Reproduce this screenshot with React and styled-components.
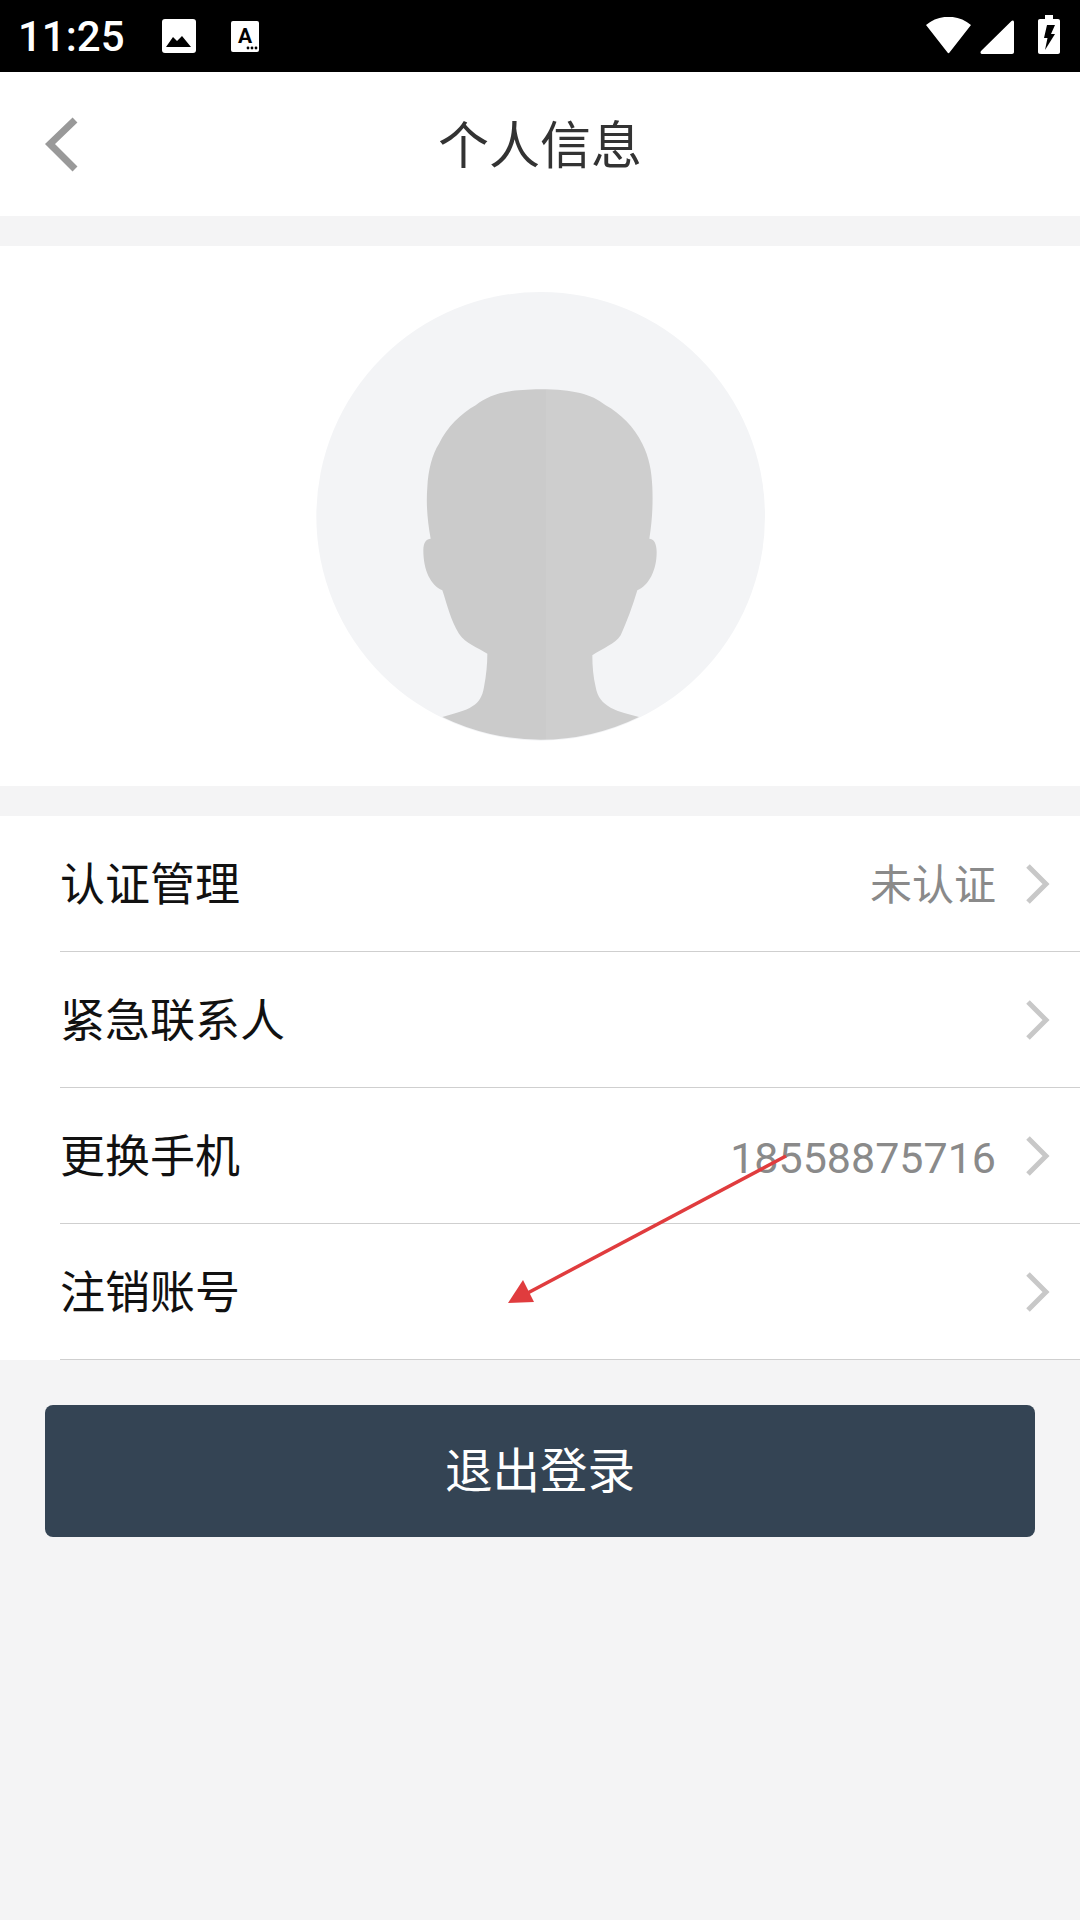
import React from "react";
import styled, { createGlobalStyle } from "styled-components";

const GlobalStyle = createGlobalStyle`
  html, body {
    margin: 0;
    padding: 0;
    background-color: #f4f4f5;
  }
  * {
    box-sizing: border-box;
  }
`;

const Page = styled.div`
  position: relative;
  width: 1080px;
  height: 1920px;
  overflow: hidden;
  background-color: #f4f4f5;
  font-family: "Roboto", "Noto Sans CJK SC", sans-serif;
`;

const StatusBar = styled.div`
  display: flex;
  align-items: center;
  height: 72px;
  padding: 0 20px 0 18px;
  background-color: #000;
  color: #fff;
`;

const Clock = styled.span`
  width: 109px;
  font-size: 42px;
  font-weight: 500;
  white-space: nowrap;
`;

const StatusLeft = styled.div`
  display: flex;
  align-items: center;
  gap: 35px;
  flex: 1;
`;

const StatusRight = styled.div`
  display: flex;
  align-items: flex-end;
  height: 72px;
  padding-bottom: 18px;
`;

const SignalSlot = styled.div`
  display: flex;
  margin: 0 24px 0 9px;
`;

const NavBar = styled.div`
  display: flex;
  align-items: center;
  justify-content: center;
  position: relative;
  height: 144px;
  padding-bottom: 5px;
  background-color: #fff;
`;

const BackIcon = styled.svg`
  position: absolute;
  left: 43px;
  top: 43px;
`;

const Title = styled.h1`
  margin: 0;
  font-size: 51px;
  font-weight: 400;
  color: #333;
`;

const AvatarSection = styled.div`
  display: flex;
  justify-content: center;
  margin-top: 30px;
  padding: 46px 0 45px;
  background-color: #fff;
`;

const List = styled.div`
  margin-top: 30px;
  padding-left: 60px;
  background-color: #fff;
`;

const Row = styled.div`
  display: flex;
  align-items: center;
  height: 136px;
  padding-right: 28px;
  border-bottom: 1px solid #cfcfcf;
`;

const RowLabel = styled.span`
  flex: 1;
  padding-bottom: 5px;
  font-size: 45px;
  color: #111;
`;

const RowValue = styled.span`
  margin-right: 28px;
  padding: ${(props) => (props.$numeric ? "5px 0 0" : "0 0 5px")};
  font-size: ${(props) => (props.$numeric ? "43px" : "42px")};
  color: #8a8a8a;
`;

const LogoutButton = styled.button`
  display: block;
  width: 990px;
  height: 132px;
  margin: 45px auto 0;
  padding: 0 0 7px;
  border: none;
  border-radius: 8px;
  background-color: #344454;
  color: #fff;
  font-family: inherit;
  font-size: 47.5px;
`;

const ArrowOverlay = styled.svg`
  position: absolute;
  left: 0;
  top: 0;
  pointer-events: none;
`;

const ImageIcon = () => (
  <svg width="34" height="34" viewBox="0 0 34 34">
    <rect width="34" height="34" rx="3" fill="#fff" />
    <path d="M4 28 L11 18 L15 22 L20 17 L29 28 Z" fill="#000" />
  </svg>
);

const AccessIcon = () => (
  <svg width="28" height="31" viewBox="0 0 28 31">
    <rect width="28" height="31" rx="2" fill="#fff" />
    <text x="14" y="22" textAnchor="middle" fontSize="21" fontWeight="700" fontFamily="Roboto, sans-serif" fill="#000">
      A
    </text>
    <circle cx="17" cy="27" r="1.4" fill="#000" />
    <circle cx="21" cy="27" r="1.4" fill="#000" />
    <circle cx="25" cy="27" r="1.4" fill="#000" />
  </svg>
);

const WifiIcon = () => (
  <svg width="45" height="37" viewBox="0 0 45 37">
    <path d="M0 8 C13 -3 32 -3 45 8 L23.5 35.5 C22.9 36.5 22.1 36.5 21.5 35.5 Z" fill="#fff" />
  </svg>
);

const SignalIcon = () => (
  <svg width="34" height="34" viewBox="0 0 34 34">
    <path d="M34 2 C34 0.5 32.5 0 31.5 1 L1 31 C0 32 0.5 34 2 34 L32 34 C33.2 34 34 33.2 34 32 Z" fill="#fff" />
  </svg>
);

const BatteryIcon = () => (
  <svg width="22" height="39" viewBox="0 0 22 39">
    <path
      d="M7 0 H15 V4 H20 C21.2 4 22 4.8 22 6 V37 C22 38.2 21.2 39 20 39 H2 C0.8 39 0 38.2 0 37 V6 C0 4.8 0.8 4 2 4 H7 Z"
      fill="#fff"
    />
    <path d="M9 10 H17 L13 19 H17 L7 35 L9.5 23 H6 Z" fill="#000" />
  </svg>
);

const Chevron = () => (
  <svg width="28" height="42" viewBox="0 0 28 42">
    <path d="M4 3 L22 21 L4 39" fill="none" stroke="#c8c8c8" strokeWidth="5" />
  </svg>
);

// drawn in the zoomed crop's coordinates, which is why the viewBox is so big
const Avatar = () => (
  <svg width="449" height="449" viewBox="76 65 1347 1347">
    <defs>
      <linearGradient id="faceFill" gradientUnits="userSpaceOnUse" x1="0" y1="0" x2="1500" y2="0">
        <stop offset="0.511" stopColor="#cbcbcb" />
        <stop offset="0.511" stopColor="#cecece" />
      </linearGradient>
    </defs>
    <circle cx="750" cy="738" r="673" fill="#f3f4f6" />
    <path
      fill="url(#faceFill)"
      d="M455 1340 C490 1330 525 1322 545 1308 C565 1295 575 1280 580 1250 C587 1215 590 1180 590 1150 C560 1130 525 1120 505 1090 C480 1050 470 1005 455 960 C420 945 398 900 398 840 C398 815 408 805 420 805 C410 750 406 700 410 650 C412 600 425 550 445 520 C470 470 510 430 555 405 C600 370 650 358 750 357 C850 358 900 370 945 405 C990 430 1030 470 1055 520 C1075 560 1083 600 1085 650 C1087 700 1085 750 1076 805 C1090 805 1098 820 1098 845 C1098 900 1075 945 1040 960 C1025 1010 1010 1050 990 1095 C975 1120 935 1135 905 1155 C905 1190 908 1220 915 1250 C920 1280 935 1298 960 1312 C985 1325 1015 1332 1045 1340 A673 673 0 0 1 455 1340 Z"
    />
  </svg>
);

const rows = [
  { label: "认证管理", value: "未认证" },
  { label: "紧急联系人" },
  { label: "更换手机", value: "18558875716", numeric: true },
  { label: "注销账号" },
];

const App = () => {
  return (
    <Page>
      <GlobalStyle />
      <StatusBar>
        <StatusLeft>
          <Clock>11:25</Clock>
          <ImageIcon />
          <AccessIcon />
        </StatusLeft>
        <StatusRight>
          <WifiIcon />
          <SignalSlot>
            <SignalIcon />
          </SignalSlot>
          <BatteryIcon />
        </StatusRight>
      </StatusBar>

      <NavBar>
        <BackIcon width="36" height="60" viewBox="0 0 36 60">
          <path d="M32 5 L7 29 L32 54" fill="none" stroke="#999" strokeWidth="7" />
        </BackIcon>
        <Title>个人信息</Title>
      </NavBar>

      <AvatarSection>
        <Avatar />
      </AvatarSection>

      <List>
        {rows.map((row) => (
          <Row key={row.label}>
            <RowLabel>{row.label}</RowLabel>
            {row.value && <RowValue $numeric={row.numeric}>{row.value}</RowValue>}
            <Chevron />
          </Row>
        ))}
      </List>

      <LogoutButton>退出登录</LogoutButton>

      <ArrowOverlay width="1080" height="1920" viewBox="0 0 1080 1920">
        <line x1="786" y1="1156" x2="522" y2="1296" stroke="#e03c3e" strokeWidth="3.5" />
        <path d="M508 1303 L523 1280 L534 1302 Z" fill="#e03c3e" />
      </ArrowOverlay>
    </Page>
  );
};

export default App;
